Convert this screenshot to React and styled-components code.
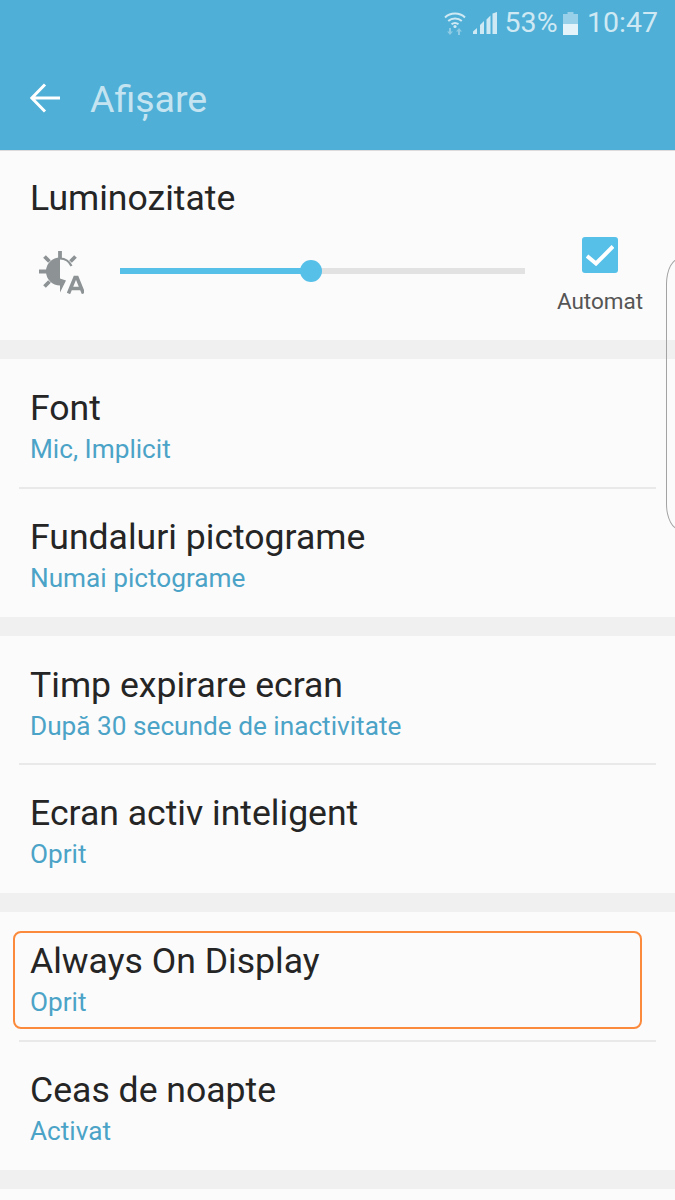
import React from 'react';
import styled, { createGlobalStyle } from 'styled-components';

const GlobalStyle = createGlobalStyle`
  html, body {
    margin: 0;
    padding: 0;
    height: 1200px;
    overflow: hidden;
    background: #f0f0f0;
    font-family: Roboto, "Liberation Sans", sans-serif;
  }
`;

const Page = styled.div`
  position: relative;
  width: 675px;
  height: 1200px;
  overflow: hidden;
  background: #f0f0f0;
`;

const Header = styled.header`
  height: 150px;
  background: #4fafd6;
  border-bottom: 1px solid #dcdcdc;
`;

const StatusBar = styled.div`
  height: 46px;
  display: flex;
  align-items: center;
  justify-content: flex-end;
  padding-right: 17px;
  color: #cfe9f4;
  font-size: 28.5px;
  line-height: 46px;
`;

const StatusText = styled.span`
  margin-left: ${(p) => p.$gap || 0}px;
`;

const StatusIcon = styled.svg`
  display: block;
  margin-left: ${(p) => p.$gap || 0}px;
`;

const ActionBar = styled.div`
  height: 104px;
  display: flex;
  align-items: center;
  padding-left: 30px;
`;

const Title = styled.h1`
  margin: 1px 0 0 30px;
  font-size: 37.5px;
  font-weight: 400;
  color: #c5e4f1;
`;

const Section = styled.section`
  background: #fbfbfb;
  margin-bottom: 19px;
`;

const Row = styled.div`
  position: relative;
  height: 128.8px;
  box-sizing: border-box;
  padding: 29px 0 0 30px;
  &:not(:last-child)::after {
    content: '';
    position: absolute;
    left: 19px;
    right: 19px;
    bottom: -1px;
    height: 2px;
    background: #e9e9e9;
  }
`;

const RowTitle = styled.div`
  font-size: 35.6px;
  line-height: 40px;
  color: #252525;
`;

const RowValue = styled.div`
  margin-top: 3px;
  font-size: 26.2px;
  line-height: 36px;
  color: #4ba3c7;
`;

const BrightnessPanel = styled.div`
  height: 189px;
  box-sizing: border-box;
  padding-top: 27px;
`;

const BrightnessTitle = styled(RowTitle)`
  padding-left: 30px;
`;

const SliderRow = styled.div`
  display: flex;
  align-items: flex-start;
  margin-top: 33px;
  padding-left: 39px;
`;

const SliderTrack = styled.div`
  position: relative;
  width: 405px;
  height: 6px;
  margin: 17px 0 0 36px;
  background: #e2e2e2;
`;

const SliderFill = styled.div`
  height: 100%;
  background: #56c0e8;
`;

const SliderThumb = styled.div`
  position: absolute;
  top: -8px;
  width: 22px;
  height: 22px;
  border-radius: 50%;
  background: #56c0e8;
  transform: translateX(-50%);
`;

const AutoBox = styled.div`
  display: flex;
  flex-direction: column;
  align-items: center;
  width: 86px;
  margin: -14px 0 0 32px;
`;

const CheckBox = styled.div`
  width: 36px;
  height: 36px;
  border-radius: 3px;
  background: #56c0e8;
  display: flex;
  align-items: center;
  justify-content: center;
`;

const AutoLabel = styled.div`
  margin-top: 15px;
  font-size: 22.5px;
  line-height: 26px;
  color: #555;
  white-space: nowrap;
`;

const FocusBox = styled.div`
  position: absolute;
  left: 13px;
  right: 33px;
  top: 19px;
  height: 98px;
  box-sizing: border-box;
  border: 2px solid #fb8a3c;
  border-radius: 8px;
`;

const EdgeHandle = styled.div`
  position: absolute;
  left: 666px;
  top: 258px;
  width: 40px;
  height: 272px;
  box-sizing: border-box;
  border: 1.5px solid #a3a3a3;
  border-radius: 14px / 26px;
`;

const rows = [
  [
    { title: 'Font', value: 'Mic, Implicit' },
    { title: 'Fundaluri pictograme', value: 'Numai pictograme' },
  ],
  [
    { title: 'Timp expirare ecran', value: 'După 30 secunde de inactivitate' },
    { title: 'Ecran activ inteligent', value: 'Oprit' },
  ],
  [
    { title: 'Always On Display', value: 'Oprit', focused: true },
    { title: 'Ceas de noapte', value: 'Activat' },
  ],
];

const WifiIcon = () => (
  <StatusIcon width="22" height="24" viewBox="0 0 22 24" fill="none">
    <path d="M1 6.500C6.500 1.300 15.500 1.300 21 6.500" stroke="#cfe9f4" strokeWidth="2" />
    <path d="M4.200 10C8 6.600 14 6.600 17.800 10" stroke="#cfe9f4" strokeWidth="2" />
    <path d="M7.500 13.300C9.600 11.700 12.400 11.700 14.500 13.300" stroke="#cfe9f4" strokeWidth="2" />
    <circle cx="11" cy="15.500" r="1.600" fill="#cfe9f4" />
    <path d="M5 17v3.500H3l3 3.500 3-3.500H7V17z" fill="#8fcbe4" />
    <path d="M14 24v-3.500h-2l3-3.500 3 3.500h-2V24z" fill="#8fcbe4" />
  </StatusIcon>
);

const SignalIcon = () => (
  <StatusIcon width="24" height="23" viewBox="0 0 24 23" $gap={7}>
    <path d="M0 22v-2.500L4 16v6zM7 22V13l4-4v13zM13.500 22V7.500l4-4V22zM19.500 22V1.500L24 0v22z" fill="#cfe9f4" />
  </StatusIcon>
);

const BatteryIcon = () => (
  <StatusIcon width="15" height="23" viewBox="0 0 15 23" $gap={5.5}>
    <path d="M4.500 0h6v2h4.500v10H0V2h4.500z" fill="#97d0e8" />
    <rect x="0" y="12" width="15" height="11" fill="#e4f3f9" />
  </StatusIcon>
);

const BackIcon = () => (
  <svg width="30" height="30" viewBox="0 0 30 30" fill="none">
    <path d="M30 15H2.500M15 1.500L1.800 15L15 28.500" stroke="#fff" strokeWidth="3" />
  </svg>
);

const BrightnessIcon = () => (
  <svg width="45" height="43" viewBox="0 0 45 43" fill="none">
    <path d="M21 6.500A14 14 0 0 0 21 34.500V41.500L27 29.500L21 27.500z" fill="#8d9295" />
    <path d="M21 7.500A13 13 0 0 1 32.500 15" stroke="#8d9295" strokeWidth="2.200" />
    <path d="M21 0V8M0 20.500h8M5.500 5.500l5 5M36.500 5.500l-5 5M5.500 35.500l5-5" stroke="#8d9295" strokeWidth="3.800" />
    <path d="M29.500 42.500L36 26.500h2L44.500 42.500M32 37.500h10" stroke="#8d9295" strokeWidth="3.600" />
  </svg>
);

const CheckIcon = () => (
  <svg width="28" height="22" viewBox="0 0 28 22" fill="none">
    <path d="M1 12L10 19.500L27 2.500" stroke="#fff" strokeWidth="4" />
  </svg>
);

export default function App() {
  const brightness = 47.2;

  return (
    <Page>
      <GlobalStyle />
      <Header>
        <StatusBar>
          <WifiIcon />
          <SignalIcon />
          <StatusText $gap={8}>53%</StatusText>
          <BatteryIcon />
          <StatusText $gap={9}>10:47</StatusText>
        </StatusBar>
        <ActionBar>
          <BackIcon />
          <Title>Afișare</Title>
        </ActionBar>
      </Header>

      <Section>
        <BrightnessPanel>
          <BrightnessTitle>Luminozitate</BrightnessTitle>
          <SliderRow>
            <BrightnessIcon />
            <SliderTrack>
              <SliderFill style={{ width: `${brightness}%` }} />
              <SliderThumb style={{ left: `${brightness}%` }} />
            </SliderTrack>
            <AutoBox>
              <CheckBox>
                <CheckIcon />
              </CheckBox>
              <AutoLabel>Automat</AutoLabel>
            </AutoBox>
          </SliderRow>
        </BrightnessPanel>
      </Section>

      {rows.map((group) => (
        <Section key={group[0].title}>
          {group.map((row) => (
            <Row key={row.title}>
              {row.focused && <FocusBox />}
              <RowTitle>{row.title}</RowTitle>
              <RowValue>{row.value}</RowValue>
            </Row>
          ))}
        </Section>
      ))}
      <Section>
        <Row />
      </Section>

      <EdgeHandle />
    </Page>
  );
}
